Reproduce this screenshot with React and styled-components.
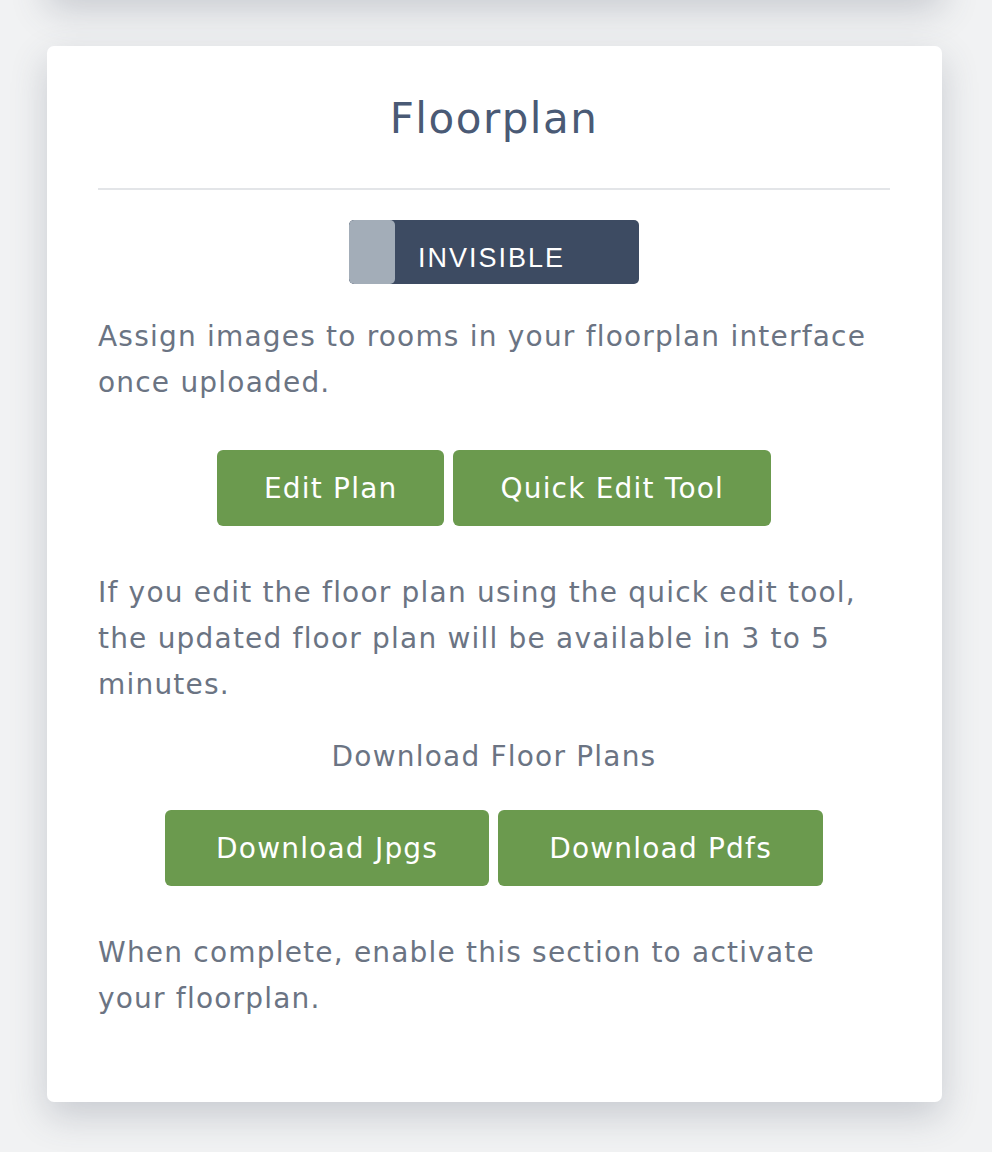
import styled, { createGlobalStyle } from 'styled-components';

const GlobalStyle = createGlobalStyle`
  body {
    margin: 0;
    background: #f1f2f3;
    font-family: 'DejaVu Sans', 'Noto Sans', sans-serif;
  }
`

export default function App() {
  return (
    <Page>
      <GlobalStyle />
      <Stack>
        <Card $height="120px" />
        <Card>
          <Title>Floorplan</Title>
          <Divider />
          <ToggleRow>
            <Toggle type="button">
              <Knob />
              <ToggleLabel>INVISIBLE</ToggleLabel>
            </Toggle>
          </ToggleRow>
          <Text>Assign images to rooms in your floorplan interface once uploaded.</Text>
          <ButtonRow>
            <Button>Edit Plan</Button>
            <Button>Quick Edit Tool</Button>
          </ButtonRow>
          <Text>
            If you edit the floor plan using the quick edit tool, the updated floor plan will be available in 3 to 5 minutes.
          </Text>
          <Caption>Download Floor Plans</Caption>
          <ButtonRow $top="30px">
            <Button $pad="51px">Download Jpgs</Button>
            <Button $pad="51px">Download Pdfs</Button>
          </ButtonRow>
          <Text>When complete, enable this section to activate your floorplan.</Text>
        </Card>
      </Stack>
    </Page>
  )
}

const Page = styled.div`
  height: 1152px;
  overflow: hidden;
`

const Stack = styled.div`
  display: flex;
  flex-direction: column;
  gap: 50px;
  margin: -128px 50px 0 47px;
`

const Card = styled.section`
  background: #fff;
  border-radius: 7px;
  box-shadow: 0 14px 36px rgba(70, 80, 100, 0.24);
  padding: 44px 52px 80px 51px;
  height: ${p => p.$height || 'auto'};
  box-sizing: border-box;
`

const Title = styled.h2`
  margin: 0;
  text-align: center;
  font-weight: 400;
  font-size: 42px;
  letter-spacing: 1.5px;
  line-height: 58px;
  color: #4a5a75;
`

const Divider = styled.hr`
  border: none;
  border-top: 2px solid #e3e5e8;
  margin: 40px 0 30px;
`

const ToggleRow = styled.div`
  display: flex;
  justify-content: center;
`

const Toggle = styled.button`
  width: 290px;
  height: 64px;
  display: flex;
  align-items: center;
  padding: 0;
  border: none;
  border-radius: 5px;
  background: #3d4b62;
  overflow: hidden;
  cursor: pointer;
`

const Knob = styled.span`
  width: 46px;
  height: 100%;
  background: #a3adb8;
  border-radius: 5px;
  flex: none;
`

const ToggleLabel = styled.span`
  margin-left: 23px;
  padding-top: 12px;
  font-family: inherit;
  font-size: 27px;
  letter-spacing: 2px;
  color: #fff;
`

const Text = styled.p`
  margin: 30px 0 0;
  font-size: 28px;
  letter-spacing: 1.2px;
  line-height: 46px;
  color: #6b7483;
`

const Caption = styled.p`
  margin: 26px 0 0;
  text-align: center;
  font-size: 28px;
  letter-spacing: 1.2px;
  line-height: 46px;
  color: #6b7483;
`

const ButtonRow = styled.div`
  display: flex;
  justify-content: center;
  gap: 9px;
  margin-top: ${p => p.$top || '44px'};
  & + p {
    margin-top: 44px;
  }
`

const Button = styled.button`
  height: 76px;
  padding: 0 ${p => p.$pad || '47px'};
  border: none;
  border-radius: 6px;
  background: #6b9a4e;
  color: #fff;
  font-family: inherit;
  font-size: 28px;
  letter-spacing: 1.2px;
  cursor: pointer;
`
